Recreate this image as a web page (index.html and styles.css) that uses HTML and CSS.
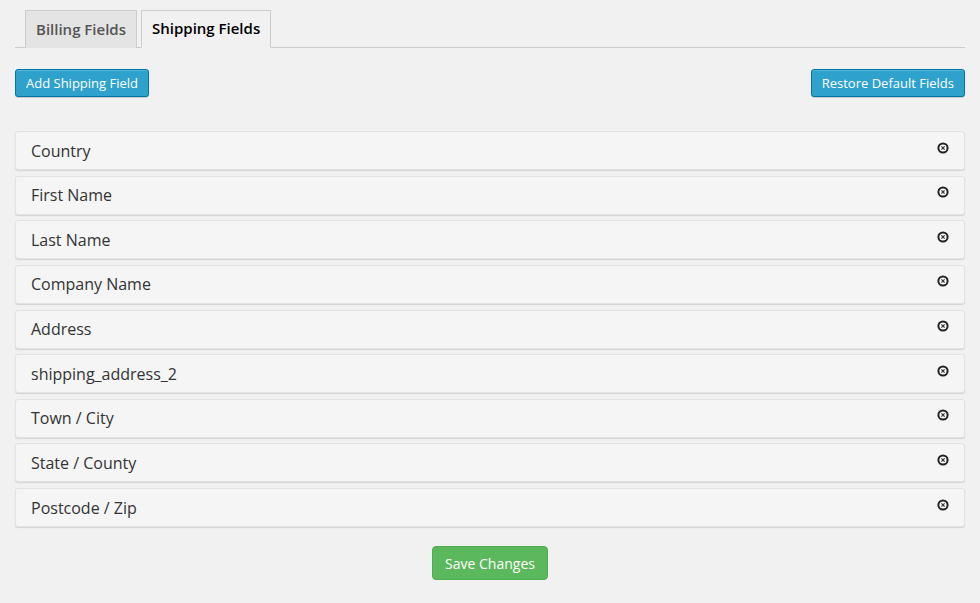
FILE: index.html
```html
<!DOCTYPE html>
<html>
<head>
<meta charset="utf-8">
<link rel="stylesheet" href="styles.css">
</head>
<body>
<div class="wrap">
  <nav class="tabs">
    <a class="tab">Billing Fields</a>
    <a class="tab active">Shipping Fields</a>
  </nav>
  <div class="actions">
    <button class="btn-primary">Add Shipping Field</button>
    <button class="btn-primary">Restore Default Fields</button>
  </div>
  <ul class="fields">
    <li class="field"><span>Country</span><svg class="x" viewBox="0 0 12 12"><circle cx="6" cy="6" r="4.6" fill="#fff" stroke="#222" stroke-width="2"/><path d="M4.4 4.4l3.2 3.2M7.6 4.4l-3.2 3.2" stroke="#333" stroke-width="1.3"/></svg></li>
    <li class="field"><span>First Name</span><svg class="x" viewBox="0 0 12 12"><circle cx="6" cy="6" r="4.6" fill="#fff" stroke="#222" stroke-width="2"/><path d="M4.4 4.4l3.2 3.2M7.6 4.4l-3.2 3.2" stroke="#333" stroke-width="1.3"/></svg></li>
    <li class="field"><span>Last Name</span><svg class="x" viewBox="0 0 12 12"><circle cx="6" cy="6" r="4.6" fill="#fff" stroke="#222" stroke-width="2"/><path d="M4.4 4.4l3.2 3.2M7.6 4.4l-3.2 3.2" stroke="#333" stroke-width="1.3"/></svg></li>
    <li class="field"><span>Company Name</span><svg class="x" viewBox="0 0 12 12"><circle cx="6" cy="6" r="4.6" fill="#fff" stroke="#222" stroke-width="2"/><path d="M4.4 4.4l3.2 3.2M7.6 4.4l-3.2 3.2" stroke="#333" stroke-width="1.3"/></svg></li>
    <li class="field"><span>Address</span><svg class="x" viewBox="0 0 12 12"><circle cx="6" cy="6" r="4.6" fill="#fff" stroke="#222" stroke-width="2"/><path d="M4.4 4.4l3.2 3.2M7.6 4.4l-3.2 3.2" stroke="#333" stroke-width="1.3"/></svg></li>
    <li class="field"><span>shipping_address_2</span><svg class="x" viewBox="0 0 12 12"><circle cx="6" cy="6" r="4.6" fill="#fff" stroke="#222" stroke-width="2"/><path d="M4.4 4.4l3.2 3.2M7.6 4.4l-3.2 3.2" stroke="#333" stroke-width="1.3"/></svg></li>
    <li class="field"><span>Town / City</span><svg class="x" viewBox="0 0 12 12"><circle cx="6" cy="6" r="4.6" fill="#fff" stroke="#222" stroke-width="2"/><path d="M4.4 4.4l3.2 3.2M7.6 4.4l-3.2 3.2" stroke="#333" stroke-width="1.3"/></svg></li>
    <li class="field"><span>State / County</span><svg class="x" viewBox="0 0 12 12"><circle cx="6" cy="6" r="4.6" fill="#fff" stroke="#222" stroke-width="2"/><path d="M4.4 4.4l3.2 3.2M7.6 4.4l-3.2 3.2" stroke="#333" stroke-width="1.3"/></svg></li>
    <li class="field"><span>Postcode / Zip</span><svg class="x" viewBox="0 0 12 12"><circle cx="6" cy="6" r="4.6" fill="#fff" stroke="#222" stroke-width="2"/><path d="M4.4 4.4l3.2 3.2M7.6 4.4l-3.2 3.2" stroke="#333" stroke-width="1.3"/></svg></li>
  </ul>
  <div class="save-row">
    <button class="btn-save">Save Changes</button>
  </div>
</div>
</body>
</html>
```

FILE: styles.css
```css
html, body {
  margin: 0;
  padding: 0;
  background: #f1f1f1;
  font-family: "Open Sans", "Noto Sans", sans-serif;
  color: #333;
}
.wrap {
  padding: 10px 15px 0 15px;
}
.tabs {
  display: flex;
  gap: 4px;
  padding-left: 10px;
  border-bottom: 1px solid #ccc;
  height: 37px;
}
.tab {
  box-sizing: border-box;
  height: 38px;
  padding: 0 10px 2px 10px;
  border: 1px solid #ccc;
  border-bottom: none;
  background: #e4e4e4;
  color: #555;
  font-size: 15px;
  font-weight: 600;
  display: flex;
  align-items: center;
}
.tab.active {
  background: #f1f1f1;
  color: #000;
  border-bottom: 1px solid #f1f1f1;
}
.actions {
  display: flex;
  justify-content: space-between;
  margin-top: 21px;
}
.btn-primary {
  box-sizing: border-box;
  height: 28px;
  padding: 0 10px;
  background: #2ea2cc;
  border: 1px solid #0074a2;
  border-radius: 3px;
  color: #fff;
  font-family: "Open Sans", "Noto Sans", sans-serif;
  font-size: 13px;
  box-shadow: inset 0 1px 0 rgba(120,200,230,.5), 0 1px 0 rgba(0,0,0,.15);
}
.fields {
  list-style: none;
  margin: 34px 0 0 0;
  padding: 0;
}
.field {
  box-sizing: border-box;
  height: 39px;
  margin-bottom: 5.625px;
  background: #f5f5f5;
  border: 1px solid #e2e2e2;
  border-radius: 3px;
  box-shadow: 0 1px 1px rgba(0,0,0,.12);
  display: flex;
  align-items: center;
  justify-content: space-between;
  padding: 0 15px;
  font-size: 16px;
  color: #333;
}
.x {
  width: 12px;
  height: 12px;
  position: relative;
  top: -3px;
  margin-right: 0;
}
.save-row {
  display: flex;
  justify-content: center;
  margin-top: 19px;
}
.btn-save {
  box-sizing: border-box;
  width: 116px;
  height: 34px;
  background: #5cb85c;
  border: 1px solid #4cae4c;
  border-radius: 4px;
  color: #fff;
  font-family: "Open Sans", "Noto Sans", sans-serif;
  font-size: 14px;
}
```
